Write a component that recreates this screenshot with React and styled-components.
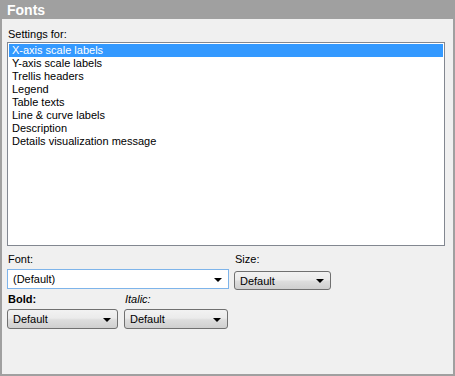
import styled, { createGlobalStyle } from "styled-components";
import { useState } from "react";

const Global = createGlobalStyle`
  html, body {
    margin: 0;
    padding: 0;
    background: #ffffff;
  }
  body {
    font-family: "Liberation Sans", Arial, sans-serif;
    font-size: 11px;
    color: #000;
  }
`;

const Frame = styled.div`
  width: 455px;
  height: 376px;
  box-sizing: border-box;
  border: 1px solid #a0a0a0;
  border-width: 1px 2px 2px 2px;
  background: #f0f0f0;
  display: flex;
  flex-direction: column;
`;

const Header = styled.div`
  height: 18px;
  background: #a0a0a0;
  color: #ffffff;
  font-weight: bold;
  font-size: 14px;
  line-height: 18px;
  padding-left: 5px;
`;

const Body = styled.div`
  padding: 9px 8px 0 5px;
  display: flex;
  flex-direction: column;
`;

const Label = styled.div`
  line-height: 13px;
  padding-left: 1px;
  font-weight: ${(p) => (p.bold ? "bold" : "normal")};
  font-style: ${(p) => (p.italic ? "italic" : "normal")};
`;

const List = styled.div`
  margin-top: 1px;
  width: 438px;
  height: 204px;
  box-sizing: border-box;
  border: 1px solid #828790;
  background: #fff;
  padding: 1px;
  display: flex;
  flex-direction: column;
`;

const Item = styled.div`
  height: 13px;
  line-height: 13px;
  padding-left: 3px;
  background: ${(p) => (p.selected ? "#3399ff" : "transparent")};
  color: ${(p) => (p.selected ? "#fff" : "#000")};
  cursor: default;
`;

const Row = styled.div`
  display: flex;
  gap: ${(p) => p.gap || 6}px;
  margin-top: ${(p) => p.top || 0}px;
`;

const Field = styled.div`
  display: flex;
  flex-direction: column;
  gap: ${(p) => p.gap || 2}px;
`;

const Combo = styled.div`
  width: ${(p) => p.w}px;
  height: ${(p) => p.h || 20}px;
  box-sizing: border-box;
  display: flex;
  align-items: center;
  justify-content: space-between;
  padding: 0 6px 0 5px;
  border: 1px solid ${(p) => (p.editable ? "#7eb4ea" : "#707070")};
  border-radius: ${(p) => (p.editable ? "0" : "3px")};
  background: ${(p) =>
    p.editable
      ? "#ffffff"
      : "linear-gradient(#f2f2f2 0%, #ebebeb 45%, #dddddd 55%, #cfcfcf 100%)"};
`;

const Arrow = styled.span`
  width: 0;
  height: 0;
  border-left: 4px solid transparent;
  border-right: 4px solid transparent;
  border-top: 4px solid #000;
  margin-top: 1px;
`;

const items = [
  "X-axis scale labels",
  "Y-axis scale labels",
  "Trellis headers",
  "Legend",
  "Table texts",
  "Line & curve labels",
  "Description",
  "Details visualization message",
];

const App = () => {
  const [selected, setSelected] = useState(0);

  return (
    <>
      <Global />
      <Frame>
        <Header>Fonts</Header>
        <Body>
          <Label>Settings for:</Label>
          <List>
            {items.map((it, i) => (
              <Item key={it} selected={i === selected} onClick={() => setSelected(i)}>
                {it}
              </Item>
            ))}
          </List>
          <Row gap={5} top={7}>
            <Field gap={3}>
              <Label>Font:</Label>
              <Combo w={222} editable>
                <span>(Default)</span>
                <Arrow />
              </Combo>
            </Field>
            <Field gap={5}>
              <Label>Size:</Label>
              <Combo w={97} h={19}>
                <span>Default</span>
                <Arrow />
              </Combo>
            </Field>
          </Row>
          <Row gap={6} top={3}>
            <Field gap={3}>
              <Label bold>Bold:</Label>
              <Combo w={111}>
                <span>Default</span>
                <Arrow />
              </Combo>
            </Field>
            <Field gap={3}>
              <Label italic>Italic:</Label>
              <Combo w={104}>
                <span>Default</span>
                <Arrow />
              </Combo>
            </Field>
          </Row>
        </Body>
      </Frame>
    </>
  );
};

export default App;
